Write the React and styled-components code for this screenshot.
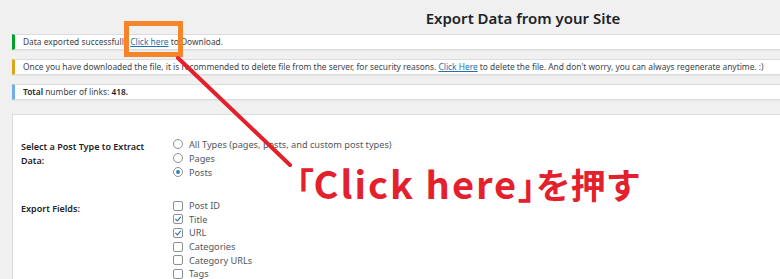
import React from 'react';
import styled, { createGlobalStyle } from 'styled-components';

const GlobalStyle = createGlobalStyle`
    html, body {
        margin: 0;
        padding: 0;
        background: #f0f0f1;
        overflow: hidden;
    }
    body {
        font-family: 'Noto Sans', 'Open Sans', sans-serif;
        color: #3c434a;
    }
`;

const postTypes = [
    { label: 'All Types (pages, posts, and custom post types)', checked: false },
    { label: 'Pages', checked: false },
    { label: 'Posts', checked: true },
];

const fields = [
    { label: 'Post ID', checked: false },
    { label: 'Title', checked: true },
    { label: 'URL', checked: true },
    { label: 'Categories', checked: false },
    { label: 'Category URLs', checked: false },
    { label: 'Tags', checked: false },
];

const App = () => {
    return (
        <Page>
            <GlobalStyle />
            <Wrap>
                <Title>Export Data from your Site</Title>

                <Notice $tone="success">
                    Data exported successfully <Link>Click here</Link> to Download.
                </Notice>
                <Notice $tone="warning">
                    Once you have downloaded the file, it is recommended to delete file from the server, for security reasons. <Link>Click Here</Link> to delete the file. And don't worry, you can always regenerate anytime. :)
                </Notice>
                <Notice $tone="info">
                    <strong>Total</strong> number of links: <strong>418.</strong>
                </Notice>

                <Card>
                    <FormGrid>
                        <FieldLabel>Select a Post Type to Extract Data:</FieldLabel>
                        <OptionList>
                            {postTypes.map((p) => (
                                <Option key={p.label} $h={14}>
                                    <Radio $checked={p.checked} />
                                    {p.label}
                                </Option>
                            ))}
                        </OptionList>

                        <FieldLabel>Export Fields:</FieldLabel>
                        <OptionList>
                            {fields.map((f) => (
                                <Option key={f.label} $h={13.6}>
                                    <Checkbox>
                                        {f.checked && (
                                            <svg width="10" height="10" viewBox="0 0 10 10">
                                                <path d="M2 5.2 L4.1 7.3 L8.2 2.6" fill="none" stroke="#2271b1" strokeWidth="1.4" strokeLinecap="round" strokeLinejoin="round" />
                                            </svg>
                                        )}
                                    </Checkbox>
                                    {f.label}
                                </Option>
                            ))}
                        </OptionList>
                    </FormGrid>
                </Card>
            </Wrap>

            {/* annotation layer */}
            <Highlight />
            <Pointer width="780" height="279" viewBox="0 0 780 279">
                <line x1="178" y1="58" x2="290" y2="165" stroke="#e3202b" strokeWidth="4" strokeLinecap="round" />
            </Pointer>
            <Callout>
                <Bracket>「</Bracket>
                <CalloutLatin>Click here</CalloutLatin>
                <Bracket>」</Bracket>を押す
            </Callout>
        </Page>
    );
};

const toneColors = {
    success: '#00a32a',
    warning: '#dba617',
    info: '#72aee6',
};

const Page = styled.div`
    position: relative;
    width: 1034px;
    height: 279px;
    overflow: hidden;
`;

const Wrap = styled.div`
    padding-left: 12px;
`;

const Title = styled.h2`
    margin: 0;
    padding-top: 6px;
    height: 28px;
    line-height: 24px;
    text-align: center;
    font-size: 15px;
    font-weight: 600;
    color: #1d2327;
`;

const Notice = styled.div`
    box-sizing: border-box;
    height: 16px;
    margin-top: ${(p) => (p.$tone === 'success' ? '0' : '9px')};
    background: #fff;
    border: 1px solid #dcdcde;
    border-left: 3px solid ${(p) => toneColors[p.$tone]};
    box-shadow: 0 1px 1px rgba(0, 0, 0, 0.04);
    padding-left: 8px;
    font-size: 8.4px;
    line-height: 14px;
    white-space: nowrap;
    color: #3c434a;

    strong {
        font-weight: 600;
        color: #1d2327;
    }
`;

const Link = styled.a`
    color: #2271b1;
    text-decoration: underline;
`;

const Card = styled.div`
    margin-top: 14px;
    height: 200px;
    background: #fff;
    border: 1px solid #dcdcde;
    padding: 22px 0 0 8px;
`;

const FormGrid = styled.div`
    display: grid;
    grid-template-columns: 152px 1fr;
    row-gap: 20px;
`;

const FieldLabel = styled.div`
    width: 130px;
    padding-top: 3px;
    font-size: 9px;
    line-height: 14px;
    font-weight: 600;
    color: #1d2327;
`;

const OptionList = styled.div`
    display: flex;
    flex-direction: column;
`;

const Option = styled.label`
    display: flex;
    align-items: center;
    gap: 6px;
    height: ${(p) => p.$h}px;
    font-size: 9.2px;
    color: #50575e;
    white-space: nowrap;
`;

const Radio = styled.span`
    box-sizing: border-box;
    width: 10px;
    height: 10px;
    border-radius: 50%;
    border: 1px solid #8c8f94;
    background: #fff;
    display: flex;
    align-items: center;
    justify-content: center;

    &::after {
        content: '';
        display: ${(p) => (p.$checked ? 'block' : 'none')};
        width: 4px;
        height: 4px;
        border-radius: 50%;
        background: #3582c4;
    }
`;

const Checkbox = styled.span`
    box-sizing: border-box;
    width: 10px;
    height: 10px;
    border-radius: 2px;
    border: 1px solid #8c8f94;
    background: #fff;
    display: flex;
    align-items: center;
    justify-content: center;

    svg {
        display: block;
    }
`;

const Highlight = styled.div`
    position: absolute;
    left: 124px;
    top: 21px;
    width: 59px;
    height: 36px;
    box-sizing: border-box;
    border: 5px solid #f5852a;
`;

const Pointer = styled.svg`
    position: absolute;
    left: 0;
    top: 0;
    pointer-events: none;
`;

const Callout = styled.div`
    position: absolute;
    left: 296px;
    top: 161px;
    font-family: 'Noto Sans CJK JP', sans-serif;
    font-size: 35px;
    line-height: 44px;
    font-weight: 700;
    color: #e3202b;
    white-space: nowrap;
    text-shadow: 0 0 3px #fff, 0 0 3px #fff;
`;

const Bracket = styled.span`
    font-feature-settings: 'palt';
`;

const CalloutLatin = styled.span`
    font-size: 38px;
    letter-spacing: 2px;
`;

export default App;
